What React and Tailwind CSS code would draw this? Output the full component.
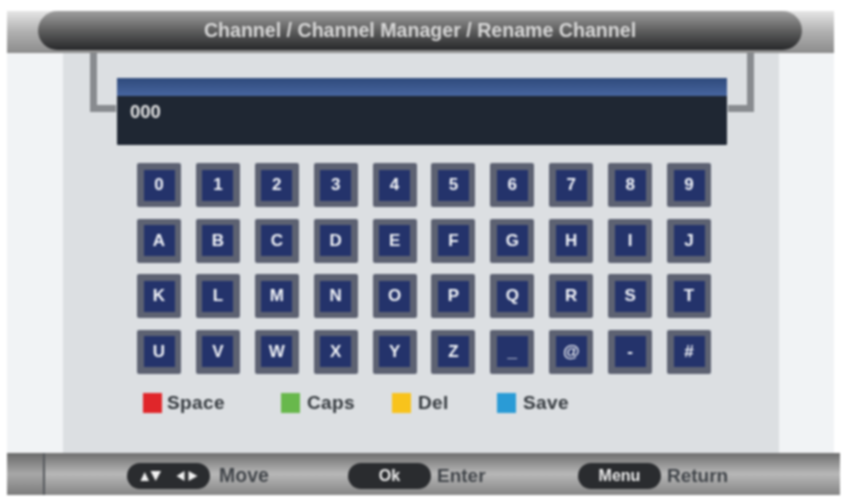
import React from "react";

const rows = [
  ["0", "1", "2", "3", "4", "5", "6", "7", "8", "9"],
  ["A", "B", "C", "D", "E", "F", "G", "H", "I", "J"],
  ["K", "L", "M", "N", "O", "P", "Q", "R", "S", "T"],
  ["U", "V", "W", "X", "Y", "Z", "_", "@", "-", "#"],
];

const legend = [
  { label: "Space", swatch: "bg-[#e0262a]", width: "w-[138px] gap-[5px]" },
  { label: "Caps", swatch: "bg-[#68b84c]", width: "w-[111px] gap-[7px]" },
  { label: "Del", swatch: "bg-[#f8c31c]", width: "w-[105px] gap-[7px]" },
  { label: "Save", swatch: "bg-[#2a9bd6]", width: "w-[105px] gap-[7px]" },
];

function Key({ value }) {
  return (
    <div className="w-[44px] h-[44px] bg-[#5d6272] rounded-[2px] flex items-center justify-center">
      <div className="w-[31px] h-[31px] bg-[#24336b] flex items-center justify-center text-[17px] font-bold text-[#f2f4f8]">
        {value}
      </div>
    </div>
  );
}

function Pill({ children }) {
  return (
    <div className="w-[83px] h-[26px] rounded-full bg-[#2a2c2f] flex items-center justify-center text-[16px] font-bold text-[#ededed]">
      {children}
    </div>
  );
}

export default function App() {
  return (
    <div className="w-[842px] h-[501px] overflow-hidden bg-white pt-[11px] pl-[7px] flex flex-col font-['Liberation_Sans',Arial,sans-serif] blur-[0.8px]">
      {/* title bar */}
      <div className="w-[827px] h-[42px] shrink-0 px-[31px] bg-gradient-to-b from-[#e6e6e6] via-[#b0b0b0] to-[#8c8c8c]">
        <div className="w-[764px] h-[39px] rounded-full border-t border-[#9a9a9a] bg-gradient-to-b from-[#9c9c9c] via-[#5e5e5e] to-[#28292b] flex items-center justify-center text-[19.6px] font-bold text-[#d8d8d8]">
          Channel / Channel Manager / Rename Channel
        </div>
      </div>

      <div className="w-[827px] h-[400px] shrink-0 flex">
        <div className="w-[56px] bg-[#f1f3f5]" />
        <div className="relative w-[716px] bg-[#dcdfe2] pl-[54px] pt-[25px]">
          {/* bracket lines behind the name box */}
          <div className="absolute left-[27px] top-0 w-[26px] h-[59px] border-l-[7px] border-b-[7px] border-[#888b8f]" />
          <div className="absolute left-[665px] top-0 w-[26px] h-[59px] border-r-[7px] border-b-[7px] border-[#888b8f]" />

          <div className="relative w-[610px] h-[67px] bg-[#1f2733] rounded-[1px]">
            <div className="h-[18px] bg-gradient-to-b from-[#2f4a7c] to-[#47659f]" />
            <div className="pl-[13px] pt-[4px] text-[18.5px] leading-[24px] font-bold text-[#e6e6e6]">000</div>
          </div>

          <div className="mt-[18px] ml-[20px] flex flex-col gap-y-[11.6px]">
            {rows.map((row, i) => (
              <div key={i} className="flex gap-x-[14.9px]">
                {row.map((k) => (
                  <Key key={k} value={k} />
                ))}
              </div>
            ))}
          </div>

          <div className="mt-[15px] ml-[26px] flex">
            {legend.map((item) => (
              <div key={item.label} className={`${item.width} flex items-center`}>
                <div className={`${item.swatch} w-[19px] h-[20px]`} />
                <span className="text-[19px] font-bold text-[#33383d] tracking-[0.4px]">{item.label}</span>
              </div>
            ))}
          </div>
        </div>
        <div className="w-[55px] bg-[#f1f3f5]" />
      </div>

      {/* footer */}
      <div className="w-[833px] h-[42px] shrink-0 flex bg-gradient-to-b from-[#6f6f6f] via-[#b8b8b8] to-[#858585]">
        <div className="w-[38px] border-r-2 border-[#55585c] bg-gradient-to-b from-[#6a6a6a] via-[#a8a8a8] to-[#7c7c7c]" />
        <div className="flex items-center pl-[82px] pt-[4px]">
          <div className="w-[221px] flex items-center gap-[9px]">
            <Pill>
              <svg width="62" height="14" viewBox="0 0 62 14" fill="#f2f2f2">
                <polygon points="2.5,12 11,12 6.7,3" />
                <polygon points="12.5,2 23,2 17.7,12" />
                <polygon points="38.5,7 46.5,2 46.5,12" />
                <polygon points="50.5,2 50.5,12 59.5,7" />
              </svg>
            </Pill>
            <span className="text-[19.5px] font-bold text-[#3f4348]">Move</span>
          </div>
          <div className="w-[230px] flex items-center gap-[6px]">
            <Pill>Ok</Pill>
            <span className="text-[19px] font-bold text-[#3f4348]">Enter</span>
          </div>
          <div className="flex items-center gap-[6px]">
            <Pill>Menu</Pill>
            <span className="text-[19px] font-bold text-[#3f4348]">Return</span>
          </div>
        </div>
      </div>
    </div>
  );
}
